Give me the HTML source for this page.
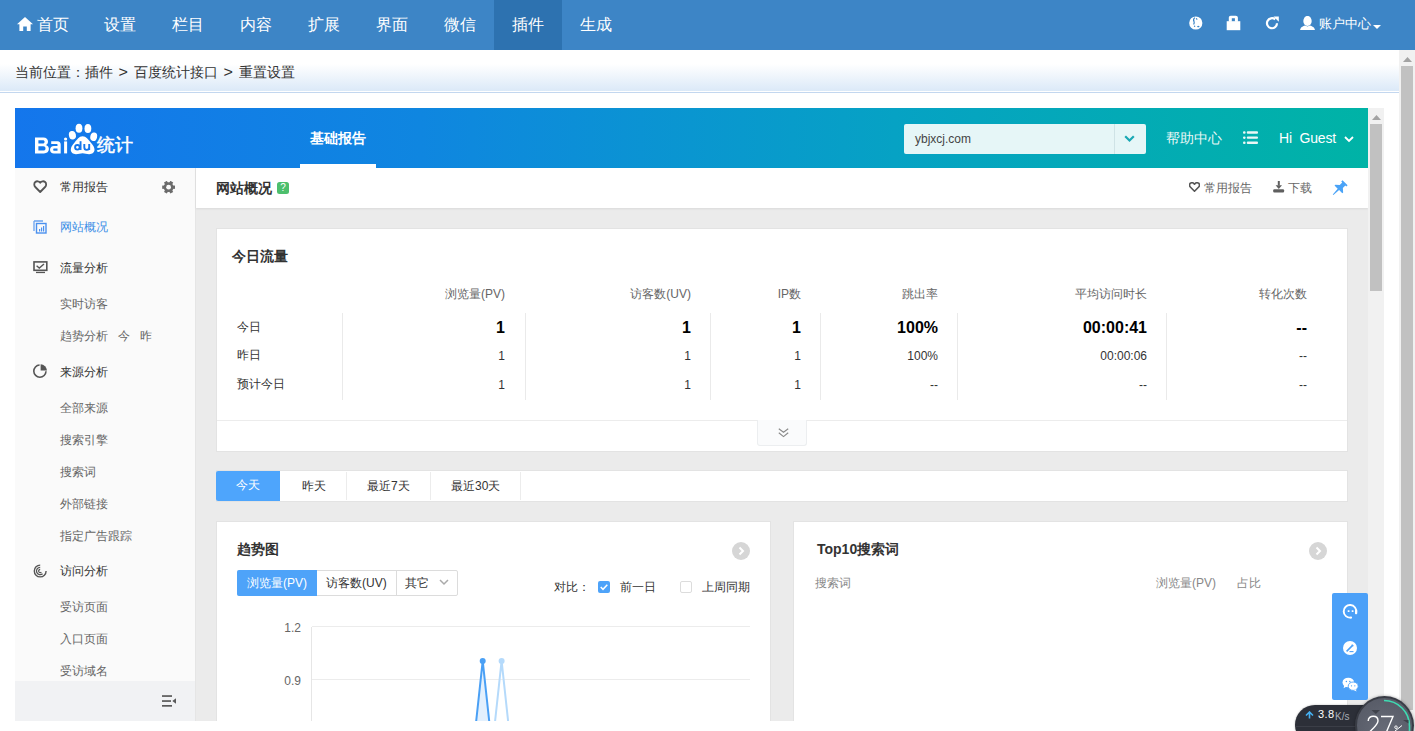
<!DOCTYPE html>
<html><head><meta charset="utf-8">
<style>
*{margin:0;padding:0;box-sizing:border-box}
html,body{width:1415px;height:731px;overflow:hidden;background:#fff;font-family:"Liberation Sans",sans-serif;color:#333}
.a{position:absolute;white-space:nowrap}
#nav{position:absolute;left:0;top:0;width:1415px;height:50px;background:#3d85c6}
#nav .it{position:absolute;top:0;height:50px;line-height:50px;color:#fff;font-size:16px;text-align:center;width:68px}
#nav .act{background:#2d72b0}
#crumb{position:absolute;left:0;top:50px;width:1399px;height:43px;background:linear-gradient(#fff 0px,#fff 14px,#dbe9f8 41px,#fff 41px,#fff 42px);border-bottom:1px solid #c3d7ef}
#crumb .gt{font-weight:normal;display:inline-block;margin:0 7px 0 6px;transform:scaleX(1.15)}
#crumb span{position:absolute;left:15px;top:14px;font-size:14px;color:#333;white-space:nowrap}
#oscroll{position:absolute;left:1399px;top:50px;width:16px;height:681px;background:#f1f1f1}
#frame{position:absolute;left:15px;top:108px;width:1369px;height:613px;overflow:hidden;background:#ebebeb}
#bdhead{position:absolute;left:0;top:0;width:1353px;height:60px;background:linear-gradient(90deg,#1476ec 0%,#0f86e0 30%,#06a2c4 65%,#00b3a6 100%)}
#iscroll{position:absolute;left:1353px;top:0;width:16px;height:613px;background:#f1f1f1}
#side{position:absolute;left:0;top:60px;width:181px;height:553px;background:#fafafa;border-right:1px solid #e5e5e5;overflow:hidden}
#side .m{position:absolute;left:45px;font-size:12px;color:#333;height:16px;line-height:16px}
#side .s{position:absolute;left:45px;font-size:12px;color:#666;height:16px;line-height:16px}
#side svg{position:absolute}
.card{position:absolute;background:#fff;border:1px solid #e3e3e3}
.t14b{font-size:14px;font-weight:bold;color:#333}
.f12{font-size:12px}
.th{position:absolute;font-size:12px;color:#666;text-align:right;white-space:nowrap}
.td{position:absolute;font-size:12px;color:#333;text-align:right;white-space:nowrap}
.big{font-size:16px;font-weight:bold;color:#000}
</style></head><body>
<div id="nav">
  <div class="it" style="left:0;width:86px"><svg style="position:absolute;left:17px;top:17px" width="16" height="14" viewBox="0 0 16 14"><path d="M8 0 L16 7.2 L13.6 7.2 L13.6 14 L9.8 14 L9.8 9.5 L6.2 9.5 L6.2 14 L2.4 14 L2.4 7.2 L0 7.2 Z" fill="#fff"/></svg><span style="position:absolute;left:37px">首页</span></div>
  <div class="it" style="left:86px">设置</div>
  <div class="it" style="left:154px">栏目</div>
  <div class="it" style="left:222px">内容</div>
  <div class="it" style="left:290px">扩展</div>
  <div class="it" style="left:358px">界面</div>
  <div class="it" style="left:426px">微信</div>
  <div class="it act" style="left:494px">插件</div>
  <div class="it" style="left:562px">生成</div>
  <!-- right icons -->
  <svg class="a" style="left:1189px;top:16px" width="14" height="14" viewBox="0 0 14 14"><circle cx="6.8" cy="7" r="6.6" fill="#fff"/><path d="M5.8 1.6 C4.6 2.6 4.3 4.2 5 5.6 C5.5 6.6 5.2 7.6 4.6 8.5" stroke="#3d85c6" stroke-width="1.2" fill="none"/><path d="M7.2 2.2 L8.2 3.6" stroke="#3d85c6" stroke-width="1.1"/><circle cx="5.6" cy="10.2" r="0.7" fill="#3d85c6"/><path d="M8 10.5 C8.8 9.6 9.8 9.6 10.6 10.4 C10 11.4 9 11.8 8 10.5 Z" fill="#3d85c6"/></svg>
  <svg class="a" style="left:1226px;top:15px" width="15" height="16" viewBox="0 0 15 16"><path fill="#fff" fill-rule="evenodd" d="M2.8 6.8 V2.8 C2.8 1.5 3.6 0.8 4.8 0.8 H9.8 C11 0.8 11.9 1.5 11.9 2.8 V6.8 H8.9 V3.2 H5.8 V6.8 Z"/><rect x="0.7" y="6.2" width="13.6" height="9" fill="#fff"/></svg>
  <svg class="a" style="left:1265px;top:16px" width="15" height="14" viewBox="0 0 15 14"><path d="M12 7.2 A5 5 0 1 1 10.2 3.4" stroke="#fff" stroke-width="2.2" fill="none"/><path d="M8.5 0.5 L13.8 0.5 L13.8 5.8 Z" fill="#fff"/></svg>
  <svg class="a" style="left:1300px;top:16px" width="15" height="14" viewBox="0 0 15 14"><ellipse cx="7.5" cy="5" rx="4.2" ry="5.1" fill="#fff"/><path d="M0 13.9 L0.8 12 C1.4 11 3 10.4 5 9.6 L7.5 10.6 L10 9.6 C12 10.4 13.6 11 14.2 12 L15 13.9 Z" fill="#fff"/></svg>
  <span class="a" style="left:1319px;top:16px;font-size:13px;color:#fff;line-height:16px">账户中心</span>
  <svg class="a" style="left:1373px;top:25px" width="8" height="4" viewBox="0 0 8 4"><path d="M0 0 H8 L4 4 Z" fill="#fff"/></svg>
</div>
<div id="crumb"><span>当前位置：插件<b class="gt">&gt;</b>百度统计接口<b class="gt">&gt;</b>重置设置</span></div>
<div id="oscroll"><svg class="a" style="left:3.5px;top:7px" width="9" height="5" viewBox="0 0 9 5"><path d="M0 5 L4.5 0 L9 5 Z" fill="#a3a3a3"/></svg><div class="a" style="left:2px;top:16px;width:12px;height:644px;background:#c1c1c1"></div></div>
<div id="frame">
  <div id="bdhead">
    <svg class="a" style="left:15px;top:10px" width="80" height="42" viewBox="0 0 80 42">
      <path fill="#fff" fill-rule="evenodd" d="M5 19.4 H13.3 C16.4 19.4 18 21.1 18 23.4 C18 25.1 17.2 26.3 15.9 27 C17.9 27.6 18.9 29.2 18.9 31.1 C18.9 33.7 17 35.4 13.9 35.4 H5 Z M8.4 22.2 H12.8 C13.9 22.2 14.6 22.9 14.6 23.8 C14.6 24.8 13.9 25.6 12.8 25.6 H8.4 Z M8.4 28.3 H13.3 C14.7 28.3 15.5 29.2 15.5 30.4 C15.5 31.7 14.7 32.5 13.3 32.5 H8.4 Z"/>
      <path fill="#fff" fill-rule="evenodd" d="M21.2 23.3 H27.5 C29.6 23.3 30.7 24.6 30.7 26.6 V35.4 H24 C21.6 35.4 20 34 20 31.7 C20 29.4 21.6 28 24 28 H27.5 V26.6 C27.5 26.3 27.3 26.1 27 26.1 H21.2 Z M24.3 30.5 H27.5 V32.8 H24.3 C23.6 32.8 23.2 32.4 23.2 31.65 C23.2 30.9 23.6 30.5 24.3 30.5 Z"/>
      <rect x="34.1" y="23.4" width="3" height="12" fill="#fff"/><circle cx="35.6" cy="21" r="1.6" fill="#fff"/>
      <ellipse cx="42.4" cy="17.3" rx="3.5" ry="4.3" transform="rotate(-12 42.4 17.3)" fill="#fff"/>
      <ellipse cx="49" cy="10.2" rx="3.4" ry="4.5" fill="#fff"/>
      <ellipse cx="57.9" cy="10.6" rx="3.4" ry="4.5" fill="#fff"/>
      <ellipse cx="63.7" cy="18.8" rx="3.4" ry="4.3" transform="rotate(12 63.7 18.8)" fill="#fff"/>
      <path fill="#fff" d="M52.6 18.3 C49 18.3 47.2 21.5 44.6 24.5 C42.1 27.3 40.8 29.5 40.8 31.8 C40.8 34.6 43 36.2 46 36.2 C48.5 36.2 50.5 35.3 52.6 35.3 C54.7 35.3 56.7 36.2 59.2 36.2 C62.2 36.2 64.5 34.6 64.5 31.8 C64.5 29.5 63.2 27.3 60.7 24.5 C58.2 21.5 56.2 18.3 52.6 18.3 Z"/>
      <circle cx="47.4" cy="29.3" r="2.3" stroke="#1476ec" stroke-width="1.9" fill="none"/><rect x="49.6" y="23.2" width="1.9" height="8.8" fill="#1476ec"/>
      <path d="M54.3 26.1 V29.3 C54.3 31 55.2 31.9 56.7 31.9 C58.2 31.9 59.2 31 59.2 29.3 V26.1 M59.2 29 V32" stroke="#1476ec" stroke-width="1.9" fill="none"/>
    </svg>
    <span class="a" style="left:82px;top:26px;font-size:18px;color:#fff;line-height:22px;-webkit-text-stroke:0.5px #fff">统计</span>
    <span class="a" style="left:295px;top:21px;font-size:14px;font-weight:bold;color:#fff;line-height:18px">基础报告</span>
    <div class="a" style="left:285px;top:56px;width:76px;height:4px;background:#fff"></div>
    <div class="a" style="left:889px;top:16px;width:242px;height:30px;background:#e6f6f7;border-radius:2px"></div>
    <div class="a" style="left:1099px;top:16px;width:1px;height:30px;background:#cfe3e6"></div>
    <span class="a" style="left:900px;top:22.5px;font-size:12px;color:#444;line-height:16px">ybjxcj.com</span>
    <svg class="a" style="left:1109px;top:27px" width="11" height="8" viewBox="0 0 11 8"><path d="M1.2 1.2 L5.5 5.5 L9.8 1.2" stroke="#19a8b4" stroke-width="2.2" fill="none"/></svg>
    <span class="a" style="left:1151px;top:21px;font-size:14px;color:#e8f7f5;line-height:18px">帮助中心</span>
    <svg class="a" style="left:1228px;top:23px" width="16" height="14" viewBox="0 0 16 14"><rect x="0" y="0.3" width="2.6" height="2.5" rx="1.1" fill="#eaf7f5"/><rect x="3.8" y="0.3" width="11.2" height="2.4" rx="1" fill="#eaf7f5"/><rect x="0" y="5.4" width="2.6" height="2.5" rx="1.1" fill="#eaf7f5"/><rect x="3.8" y="5.4" width="11.2" height="2.4" rx="1" fill="#eaf7f5"/><rect x="0" y="10.6" width="2.6" height="2.5" rx="1.1" fill="#eaf7f5"/><rect x="3.8" y="10.6" width="11.2" height="2.4" rx="1" fill="#eaf7f5"/></svg>
    <span class="a" style="left:1264px;top:21px;font-size:14px;color:#fff;line-height:18px;letter-spacing:-0.15px">Hi&nbsp;&nbsp;Guest</span>
    <svg class="a" style="left:1328.5px;top:27.5px" width="10" height="7" viewBox="0 0 10 7"><path d="M1 1 L5 5 L9 1" stroke="#fff" stroke-width="1.8" fill="none"/></svg>
  </div>
  <div id="side">
    <svg class="a" style="left:18px;top:12px" width="15" height="14" viewBox="0 0 15 14"><path d="M7.2 12 L2.3 7 C0.9 5.6 0.9 3.2 2.3 2 C3.7 0.8 5.9 1 7.2 2.8 C8.5 1 10.7 0.8 12.1 2 C13.5 3.2 13.5 5.6 12.1 7 Z" stroke="#555" stroke-width="1.8" fill="none" stroke-linejoin="round"/></svg>
    <span class="m" style="top:11px">常用报告</span>
    <svg class="a" style="left:147px;top:13px" width="14" height="13" viewBox="0 0 14 13"><line x1="0.20" y1="6.20" x2="13.00" y2="6.20" stroke="#6b6b6b" stroke-width="3.3"/><line x1="3.40" y1="0.66" x2="9.80" y2="11.74" stroke="#6b6b6b" stroke-width="3.3"/><line x1="9.80" y1="0.66" x2="3.40" y2="11.74" stroke="#6b6b6b" stroke-width="3.3"/><circle cx="6.6" cy="6.2" r="4.9" fill="#6b6b6b"/><circle cx="6.6" cy="6.2" r="2.4" fill="#fafafa"/></svg>
    <svg class="a" style="left:18px;top:52px" width="14" height="14" viewBox="0 0 14 14"><path d="M1 1 H10 M1 1 V11" stroke="#6aa3f0" stroke-width="1.3" fill="none"/><rect x="3.5" y="3.5" width="9.5" height="9.5" stroke="#4a90ee" stroke-width="1.4" fill="none"/><rect x="6" y="9" width="1.2" height="2.5" fill="#4a90ee"/><rect x="8" y="7.5" width="1.2" height="4" fill="#4a90ee"/><rect x="10" y="6" width="1.2" height="5.5" fill="#4a90ee"/></svg>
    <span class="m" style="top:51px;color:#3a8ee6">网站概况</span>
    <svg class="a" style="left:18px;top:93px" width="15" height="13" viewBox="0 0 15 13"><rect x="1" y="0.9" width="12.8" height="8.4" stroke="#555" stroke-width="1.6" fill="none"/><path d="M3.6 4.8 L6.3 7 L11 3" stroke="#555" stroke-width="1.4" fill="none"/><rect x="3" y="10.8" width="9" height="1.3" fill="#555"/></svg>
    <span class="m" style="top:92px">流量分析</span>
    <span class="s" style="top:128px">实时访客</span>
    <span class="s" style="top:160px">趋势分析</span>
    <span class="s" style="top:160px;left:103px">今</span>
    <span class="s" style="top:160px;left:125px">昨</span>
    <svg class="a" style="left:18px;top:196px" width="15" height="15" viewBox="0 0 15 15"><path d="M6.6 1 A6.1 6.1 0 1 0 13 7.3" stroke="#555" stroke-width="1.6" fill="none"/><path d="M7.6 0.2 V6.6 H14 A6.6 6.6 0 0 0 7.6 0.2 Z" fill="#555"/></svg>
    <span class="m" style="top:196px">来源分析</span>
    <span class="s" style="top:232px">全部来源</span>
    <span class="s" style="top:264px">搜索引擎</span>
    <span class="s" style="top:296px">搜索词</span>
    <span class="s" style="top:328px">外部链接</span>
    <span class="s" style="top:360px">指定广告跟踪</span>
    <svg class="a" style="left:18px;top:396px" width="15" height="15" viewBox="0 0 15 15"><path d="M7.2 1.1 A5.9 5.9 0 1 0 13.1 7" stroke="#555" stroke-width="1.4" fill="none"/><path d="M7.2 3.3 A3.7 3.7 0 1 0 9.6 9.8" stroke="#555" stroke-width="1.3" fill="none"/><path d="M7.2 5.4 A1.6 1.6 0 1 0 8.4 8.1" stroke="#555" stroke-width="1.2" fill="none"/></svg>
    <span class="m" style="top:395px">访问分析</span>
    <span class="s" style="top:431px">受访页面</span>
    <span class="s" style="top:463px">入口页面</span>
    <span class="s" style="top:495px">受访域名</span>
    <div class="a" style="left:0;top:513px;width:180px;height:40px;background:#f1f2f4"></div>
    <svg class="a" style="left:147px;top:527px" width="15" height="12" viewBox="0 0 15 12"><rect x="0" y="0.2" width="10" height="1.7" fill="#5a5a5a"/><rect x="0" y="5.2" width="9" height="1.7" fill="#5a5a5a"/><rect x="0" y="10" width="10" height="1.7" fill="#5a5a5a"/><path d="M14 3.3 L10.3 6 L14 8.7 Z" fill="#5a5a5a"/></svg>
  </div>
  <div id="main">
    <div class="a" style="left:181px;top:60px;width:1172px;height:40px;background:#fff;box-shadow:0 1px 2px rgba(0,0,0,0.08)"></div>
    <span class="a t14b" style="left:201px;top:71px;line-height:18px">网站概况</span>
    <div class="a" style="left:262px;top:74px;width:12px;height:12px;background:#4dbf6d;border-radius:2.5px;color:#fff;font-size:10px;line-height:12px;text-align:center">?</div>
    <svg class="a" style="left:1174px;top:74px" width="11" height="10" viewBox="0 0 11 10"><path d="M5.5 9.2 L1.3 5 C0.1 3.8 0.3 1.7 1.7 1 C3 0.3 4.5 0.8 5.5 2.2 C6.5 0.8 8 0.3 9.3 1 C10.7 1.7 10.9 3.8 9.7 5 Z" stroke="#555" stroke-width="1.6" fill="none" stroke-linejoin="round"/></svg>
    <span class="a" style="left:1189px;top:72px;font-size:12px;color:#666;line-height:16px">常用报告</span>
    <svg class="a" style="left:1258px;top:73px" width="12" height="12" viewBox="0 0 12 12"><rect x="4.8" y="0" width="2" height="4.5" fill="#5f5f5f"/><path d="M2.6 4.2 H9 L5.8 8 Z" fill="#5f5f5f"/><rect x="0.2" y="8.2" width="10.9" height="3.4" rx="1.1" fill="#5f5f5f"/></svg>
    <span class="a" style="left:1273px;top:72px;font-size:12px;color:#666;line-height:16px">下载</span>
    <svg class="a" style="left:1317px;top:72px" width="18" height="18" viewBox="0 0 18 18"><path transform="translate(13.05 2.75) rotate(45)" fill="#4aa3f7" d="M-3.6 0 H3.6 V1.8 H2.2 V5.3 L5.5 8.2 V9.4 H1 L0.45 16.9 H-0.45 L-1 9.4 H-5.5 V8.2 L-2.2 5.3 V1.8 H-3.6 Z"/></svg>
    <!-- card1 -->
    <div class="card" style="left:201px;top:120px;width:1132px;height:224px"></div>
    <span class="a t14b" style="left:217px;top:139px;line-height:18px">今日流量</span>
    <div class="th" style="right:879px;top:178px;line-height:16px">浏览量(PV)</div>
    <div class="th" style="right:693px;top:178px;line-height:16px">访客数(UV)</div>
    <div class="th" style="right:583px;top:178px;line-height:16px">IP数</div>
    <div class="th" style="right:446px;top:178px;line-height:16px">跳出率</div>
    <div class="th" style="right:237px;top:178px;line-height:16px">平均访问时长</div>
    <div class="th" style="right:77px;top:178px;line-height:16px">转化次数</div>
    <div class="a" style="left:327px;top:205px;width:1px;height:87px;background:#eaeaea"></div>
    <div class="a" style="left:510px;top:205px;width:1px;height:87px;background:#eaeaea"></div>
    <div class="a" style="left:695px;top:205px;width:1px;height:87px;background:#eaeaea"></div>
    <div class="a" style="left:805px;top:205px;width:1px;height:87px;background:#eaeaea"></div>
    <div class="a" style="left:942px;top:205px;width:1px;height:87px;background:#eaeaea"></div>
    <div class="a" style="left:1151px;top:205px;width:1px;height:87px;background:#eaeaea"></div>
    <span class="a" style="left:222px;top:211px;font-size:12px;color:#333;line-height:16px">今日</span>
    <span class="a" style="left:222px;top:239px;font-size:12px;color:#333;line-height:16px">昨日</span>
    <span class="a" style="left:222px;top:268px;font-size:12px;color:#333;line-height:16px">预计今日</span>
    <div class="td big" style="right:879px;top:210px;line-height:20px">1</div>
    <div class="td big" style="right:693px;top:210px;line-height:20px">1</div>
    <div class="td big" style="right:583px;top:210px;line-height:20px">1</div>
    <div class="td big" style="right:446px;top:210px;line-height:20px">100%</div>
    <div class="td big" style="right:237px;top:210px;line-height:20px">00:00:41</div>
    <div class="td big" style="right:77px;top:210px;line-height:20px">--</div>
    <div class="td" style="right:879px;top:240px;line-height:16px">1</div>
    <div class="td" style="right:693px;top:240px;line-height:16px">1</div>
    <div class="td" style="right:583px;top:240px;line-height:16px">1</div>
    <div class="td" style="right:446px;top:240px;line-height:16px">100%</div>
    <div class="td" style="right:237px;top:240px;line-height:16px">00:00:06</div>
    <div class="td" style="right:77px;top:240px;line-height:16px">--</div>
    <div class="td" style="right:879px;top:269px;line-height:16px">1</div>
    <div class="td" style="right:693px;top:269px;line-height:16px">1</div>
    <div class="td" style="right:583px;top:269px;line-height:16px">1</div>
    <div class="td" style="right:446px;top:269px;line-height:16px">--</div>
    <div class="td" style="right:237px;top:269px;line-height:16px">--</div>
    <div class="td" style="right:77px;top:269px;line-height:16px">--</div>
    <div class="a" style="left:202px;top:312px;width:1130px;height:1px;background:#ececec"></div>
    <div class="a" style="left:742px;top:312px;width:50px;height:26px;background:#fafbfc;border:1px solid #eceef0;border-top:none;border-radius:0 0 3px 3px"></div>
    <svg class="a" style="left:762.5px;top:319.5px" width="11" height="10" viewBox="0 0 11 10"><path d="M0.8 0.8 L5.5 4.2 L10.2 0.8 M0.8 4.8 L5.5 8.6 L10.2 4.8" stroke="#8a8a8a" stroke-width="1.15" fill="none"/></svg>
    <!-- tabs -->
    <div class="a" style="left:201px;top:362px;width:1132px;height:32px;background:#fff;border:1px solid #e3e3e3"></div>
    <div class="a" style="left:201px;top:363px;width:64px;height:30px;background:#4ea5fc;border-radius:2px 0 0 2px;color:#fff;font-size:12px;line-height:29px;text-align:center">今天</div>
    <div class="a" style="left:331px;top:364px;width:1px;height:28px;background:#ececec"></div>
    <div class="a" style="left:415px;top:364px;width:1px;height:28px;background:#ececec"></div>
    <div class="a" style="left:505px;top:364px;width:1px;height:28px;background:#ececec"></div>
    <span class="a" style="left:287px;top:370px;font-size:12px;color:#333;line-height:16px">昨天</span>
    <span class="a" style="left:352px;top:370px;font-size:12px;color:#333;line-height:16px">最近7天</span>
    <span class="a" style="left:436px;top:370px;font-size:12px;color:#333;line-height:16px">最近30天</span>
    <!-- trend card -->
    <div class="card" style="left:201px;top:413px;width:555px;height:220px"></div>
    <span class="a t14b" style="left:222px;top:432px;line-height:18px">趋势图</span>
    <svg class="a" style="left:717px;top:434px" width="18" height="18" viewBox="0 0 18 18"><circle cx="9" cy="9" r="9" fill="#d6d6d6"/><path d="M7.5 5.5 L11 9 L7.5 12.5" stroke="#fff" stroke-width="2" fill="none"/></svg>
    <div class="a" style="left:222px;top:462px;width:221px;height:26px;border:1px solid #dcdcdc;border-radius:2px;background:#fff"></div>
    <div class="a" style="left:222px;top:462px;width:80px;height:26px;background:#4ea3f9;border-radius:2px 0 0 2px;color:#fff;font-size:12px;line-height:26px;text-align:center">浏览量(PV)</div>
    <div class="a" style="left:381px;top:463px;width:1px;height:24px;background:#dcdcdc"></div>
    <span class="a" style="left:311px;top:467px;font-size:12px;color:#333;line-height:16px">访客数(UV)</span>
    <span class="a" style="left:390px;top:467px;font-size:12px;color:#333;line-height:16px">其它</span>
    <svg class="a" style="left:424px;top:471px" width="10" height="7" viewBox="0 0 10 7"><path d="M1 1 L5 5 L9 1" stroke="#aaa" stroke-width="1.5" fill="none"/></svg>
    <span class="a" style="left:539px;top:471px;font-size:12px;color:#333;line-height:16px">对比：</span>
    <div class="a" style="left:583px;top:473px;width:12px;height:12px;background:#4ea3f9;border-radius:2px"></div>
    <svg class="a" style="left:583px;top:473px" width="12" height="12" viewBox="0 0 12 12"><path d="M2.7 6 L5 8.3 L9.3 3.7" stroke="#fff" stroke-width="1.5" fill="none"/></svg>
    <span class="a" style="left:605px;top:471px;font-size:12px;color:#333;line-height:16px">前一日</span>
    <div class="a" style="left:665px;top:473px;width:12px;height:12px;border:1px solid #dcdcdc;border-radius:2px;background:#fff"></div>
    <span class="a" style="left:687px;top:471px;font-size:12px;color:#333;line-height:16px">上周同期</span>
    <svg class="a" style="left:260px;top:505px" width="480" height="110" viewBox="0 0 480 110">
      <line x1="36.5" y1="14" x2="36.5" y2="110" stroke="#e6e6e6" stroke-width="1"/>
      <line x1="37" y1="13.5" x2="475" y2="13.5" stroke="#ececec" stroke-width="1"/>
      <line x1="37" y1="66.5" x2="475" y2="66.5" stroke="#ececec" stroke-width="1"/>
      <text x="26" y="19" font-family="Liberation Sans" font-size="12" fill="#666" text-anchor="end">1.2</text>
      <text x="26" y="72" font-family="Liberation Sans" font-size="12" fill="#666" text-anchor="end">0.9</text>
      <path d="M188.6 224.5 L207.7 47.9 L226.8 224.5 Z" fill="#e3f0fd"/>
      <path d="M188.6 224.5 L207.7 47.9 L226.8 224.5" stroke="#4aa0f5" stroke-width="2" fill="none"/>
      <path d="M207.5 224.5 L226.6 47.9 L245.7 224.5" stroke="#b5dafb" stroke-width="2" fill="none"/>
      <circle cx="226.6" cy="47.9" r="3" fill="#b5dafb"/>
      <circle cx="207.7" cy="47.9" r="3" fill="#4aa0f5"/>
    </svg>
    <!-- top10 card -->
    <div class="card" style="left:778px;top:413px;width:555px;height:220px"></div>
    <span class="a t14b" style="left:802px;top:432px;line-height:18px">Top10搜索词</span>
    <svg class="a" style="left:1294px;top:434px" width="18" height="18" viewBox="0 0 18 18"><circle cx="9" cy="9" r="9" fill="#d6d6d6"/><path d="M7.5 5.5 L11 9 L7.5 12.5" stroke="#fff" stroke-width="2" fill="none"/></svg>
    <span class="a" style="left:800px;top:467px;font-size:12px;color:#888;line-height:16px">搜索词</span>
    <span class="a" style="left:1141px;top:467px;font-size:12px;color:#888;line-height:16px">浏览量(PV)</span>
    <span class="a" style="left:1222px;top:467px;font-size:12px;color:#888;line-height:16px">占比</span>
    <!-- float bar -->
    <div class="a" style="left:1317px;top:485px;width:36px;height:107px;background:#4ba0f8;border-radius:2px"></div>
    <svg class="a" style="left:1327px;top:495px" width="17" height="17" viewBox="0 0 17 17"><path d="M14.2 9.5 A6.3 6.3 0 1 0 8.8 14.6" stroke="#fff" stroke-width="1.9" fill="none"/><rect x="5.6" y="7.2" width="2" height="1.7" rx="0.6" fill="#fff"/><rect x="9.6" y="7.2" width="2" height="1.7" rx="0.6" fill="#fff"/><rect x="13" y="7" width="2.2" height="4.2" rx="0.8" fill="#fff"/><circle cx="9" cy="14.6" r="1.1" fill="#fff"/></svg>
    <svg class="a" style="left:1327px;top:532px" width="16" height="16" viewBox="0 0 16 16"><circle cx="8" cy="8" r="7" fill="#fff"/><path d="M4.6 11.4 L10.6 5.4" stroke="#4ba0f8" stroke-width="1.5"/><path d="M9.8 4.6 L11.4 6.2" stroke="#4ba0f8" stroke-width="1.2"/><path d="M7.5 11.6 H11.5" stroke="#4ba0f8" stroke-width="1.1"/></svg>
    <svg class="a" style="left:1327px;top:569px" width="17" height="15" viewBox="0 0 17 15"><ellipse cx="6.3" cy="5.5" rx="5.8" ry="4.8" fill="#fff"/><path d="M2.2 8.5 L1.6 11.2 L4.6 9.5 Z" fill="#fff"/><ellipse cx="11.2" cy="9.2" rx="5" ry="4.2" fill="#fff" stroke="#4ba0f8" stroke-width="0.9"/><path d="M13.6 12.3 L14.6 14.5 L11.6 13.1 Z" fill="#fff"/><circle cx="4.4" cy="4.4" r="0.75" fill="#4ba0f8"/><circle cx="7.8" cy="4.4" r="0.75" fill="#4ba0f8"/><circle cx="9.5" cy="8.8" r="0.65" fill="#4ba0f8"/><circle cx="12.8" cy="8.8" r="0.65" fill="#4ba0f8"/></svg>
  </div>
  <div id="iscroll"><svg class="a" style="left:3.5px;top:7px" width="9" height="5" viewBox="0 0 9 5"><path d="M0 5 L4.5 0 L9 5 Z" fill="#a3a3a3"/></svg><div class="a" style="left:2px;top:16px;width:12px;height:167px;background:#c1c1c1"></div></div>
</div>
<!-- speed widget -->
<div class="a" style="left:1295px;top:705px;width:100px;height:40px;background:#2c2f38;border-radius:20px;overflow:hidden;box-shadow:0 0 2px rgba(0,0,0,0.3)">
  <div class="a" style="left:0;top:21px;width:100px;height:1px;background:#3b3e47"></div>
</div>
<svg class="a" style="left:1305px;top:711px" width="9" height="8" viewBox="0 0 9 8"><path d="M4.5 1 V7.5 M1 4.5 L4.5 1 L8 4.5" stroke="#45b0f2" stroke-width="1.6" fill="none"/></svg>
<span class="a" style="left:1318px;top:708px;font-size:11px;color:#fff;line-height:13px;letter-spacing:0.3px">3.</span><span class="a" style="left:1328px;top:708px;font-size:11px;color:#fff;line-height:13px">8</span>
<span class="a" style="left:1335px;top:711px;font-size:10px;color:#a8adb6;line-height:11px">K/s</span>
<div class="a" style="left:1355px;top:696px;width:59px;height:59px;border-radius:50%;background:radial-gradient(circle at 50% 60%,#676b77 0%,#5c606c 55%,#545863 100%);border:2px solid #393c45;box-shadow:0 0 3px rgba(0,0,0,0.35)"></div>
<svg class="a" style="left:1355px;top:696px" width="60" height="35" viewBox="0 0 60 35"><path d="M29 4.5 A25.5 25.5 0 0 1 54.5 30 L54.5 35" stroke="#3edbb2" stroke-width="1.6" fill="none"/><path d="M16.5 14 L25 14 L20.8 18 Z" fill="#3f424b"/><path d="M48 24 L53.5 24 L53.5 27.5 Z" fill="#3f424b"/></svg>
<svg class="a" style="left:1366px;top:715px" width="30" height="17" viewBox="0 0 30 17"><path d="M2.2 6 C2.2 2.8 4.6 1.2 7.2 1.2 C10 1.2 12 3 12 5.8 C12 8.6 10 10.5 7.5 13 L2 18.5 H12.5" stroke="#fff" stroke-width="1.4" fill="none"/><path d="M15 1.5 H27 L20 18" stroke="#fff" stroke-width="1.4" fill="none"/></svg>
<svg class="a" style="left:1394px;top:725px" width="9" height="6" viewBox="0 0 9 6"><circle cx="2" cy="2.2" r="1.3" stroke="#fff" stroke-width="0.9" fill="none"/><path d="M1 6 L8 0.5" stroke="#fff" stroke-width="1"/></svg>
</body></html>
